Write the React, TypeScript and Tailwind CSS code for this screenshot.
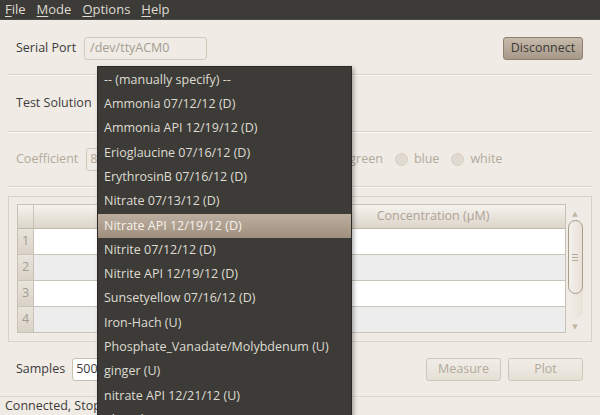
import React from 'react';

const font = { fontFamily: '"Open Sans", "DejaVu Sans", sans-serif' };

const menuItems = [
  '-- (manually specify) --',
  'Ammonia 07/12/12 (D)',
  'Ammonia API 12/19/12 (D)',
  'Erioglaucine 07/16/12 (D)',
  'ErythrosinB 07/16/12 (D)',
  'Nitrate 07/13/12 (D)',
  'Nitrate API 12/19/12 (D)',
  'Nitrite 07/12/12 (D)',
  'Nitrite API 12/19/12 (D)',
  'Sunsetyellow 07/16/12 (D)',
  'Iron-Hach (U)',
  'Phosphate_Vanadate/Molybdenum (U)',
  'ginger (U)',
  'nitrate API 12/21/12 (U)',
  'phosphate API 12/21/12 (U)',
];

function Separator() {
  return <div className="h-[2px] border-t border-[#d8d2c8] border-b border-b-[#fbfaf7]" />;
}

function Radio({ label }: { label: string }) {
  return (
    <div className="flex items-center gap-[6px]">
      <span className="w-[13px] h-[13px] rounded-full bg-[#e0dad1] border border-[#d6cfc4]" />
      <span>{label}</span>
    </div>
  );
}

function MenuBar() {
  const items = ['File', 'Mode', 'Options', 'Help'];
  return (
    <div className="h-[20px] bg-[#3c3b37] border-b border-[#4a4944] flex items-center pl-[5px] gap-[11px] text-[13px] text-[#dfdbd2]">
      {items.map((it) => (
        <span key={it}>
          <span className="underline underline-offset-2">{it[0]}</span>
          {it.slice(1)}
        </span>
      ))}
    </div>
  );
}

function Table() {
  const rows = [1, 2, 3, 4];
  return (
    <div className="flex border border-[#d9d2c6] mt-[8px] h-[146px] px-[8px] pt-[7px]">
      <div className="w-[550px] h-[129px] border border-[#c8c1b6] bg-white flex flex-col">
        <div className="h-[24px] flex bg-gradient-to-b from-[#f6f3ee] to-[#dcd5ca] border-b border-[#bfb8ac] text-[#aca396]">
          <div className="w-[16px] border-r border-[#cbc4b8]" />
          <div className="w-[267px] border-r border-[#cbc4b8]" />
          <div className="flex-1 flex items-center justify-center">Concentration (µM)</div>
        </div>
        {rows.map((r) => (
          <div key={r} className={`flex-1 flex border-b border-[#c9c3b9] last:border-b-0 ${r % 2 === 0 ? 'bg-[#ededed]' : 'bg-white'}`}>
            <div className="w-[16px] bg-gradient-to-b from-[#e9e4dc] to-[#d9d2c6] border-r border-[#c9c2b6] flex items-center justify-center text-[#a39c92]">
              {r}
            </div>
            <div className="flex-1" />
          </div>
        ))}
      </div>
      <div className="w-[16px] ml-[1px] h-[129px] flex flex-col items-center text-[#bdb5a8]">
        <span className="text-[7px] leading-none mt-[6px]">▲</span>
        <div className="mt-[3px] w-[15px] h-[99px] rounded-full bg-gradient-to-r from-[#f1ede6] to-[#e9e3d9] flex flex-col">
          <div className="h-[74px] rounded-full border border-[#a99d8c] bg-gradient-to-r from-[#f4f1ec] to-[#e7e1d8] flex flex-col items-center justify-center gap-[2px]">
            <span className="w-[6px] h-px bg-[#b5ab9c]" />
            <span className="w-[6px] h-px bg-[#b5ab9c]" />
            <span className="w-[6px] h-px bg-[#b5ab9c]" />
          </div>
        </div>
        <span className="text-[7px] leading-none mt-[4px]">▼</span>
      </div>
    </div>
  );
}

function DropdownMenu() {
  return (
    <div className="absolute left-[97px] top-[66px] w-[255px] h-[360px] bg-[#3c3b37] border border-[#2a2926] pt-[1px] text-[#dfdbd2] shadow-[2px_2px_4px_rgba(0,0,0,0.3)]">
      {menuItems.map((m, i) => (
        <div
          key={m}
          className={`h-[24.3px] flex items-center pl-[6px] whitespace-nowrap ${i === 6 ? 'bg-gradient-to-b from-[#bcae9f] to-[#9f8f7e] text-[#f5f2ed]' : ''}`}
        >
          {m}
        </div>
      ))}
    </div>
  );
}

export default function App() {
  return (
    <div className="relative w-[600px] h-[415px] overflow-hidden bg-[#f0ebe4] text-[12.5px] text-[#3c3c3c]" style={font}>
      <MenuBar />
      <div className="px-[8px]">
        <div className="flex items-center px-[8px] pt-[17px] pb-[14px]">
          <span className="mr-[8px]">Serial Port</span>
          <div className="w-[123px] h-[23px] border border-[#d3cabb] rounded-[3px] flex items-center px-[5px] text-[#a59d91]">
            /dev/ttyACM0
          </div>
          <div className="ml-auto mr-[1px] w-[80px] h-[23px] rounded-[3px] border border-[#8f806e] bg-gradient-to-b from-[#c6baab] to-[#a7998a] flex items-center justify-center text-[#3c3b37]">
            Disconnect
          </div>
        </div>
        <Separator />
        <div className="h-[55px] flex items-center px-[8px]">
          <span>Test Solution</span>
        </div>
        <Separator />
        <div className="h-[53px] flex items-center px-[8px] text-[#b3aa9c]">
          <span className="mr-[8px]">Coefficient</span>
          <div className="w-[90px] h-[23px] border border-[#d3cabb] rounded-[3px] flex items-center px-[3px]">8</div>
          <div className="ml-[154px] flex items-center gap-[12px]">
            <Radio label="green" />
            <Radio label="blue" />
            <Radio label="white" />
          </div>
        </div>
        <Separator />
        <Table />
        <div className="h-[54px] flex items-center px-[8px]">
          <span className="mr-[7px]">Samples</span>
          <div className="w-[70px] h-[23px] border border-[#c9bfae] bg-white rounded-[3px] flex items-center px-[3px]">500</div>
          <div className="ml-auto mr-[1px] flex gap-[7px] text-[#b3aa9c]">
            <div className="w-[75px] h-[23px] rounded-[3px] border border-[#cec6b9] bg-gradient-to-b from-[#f1ede7] to-[#e6e0d6] flex items-center justify-center">Measure</div>
            <div className="w-[75px] h-[23px] rounded-[3px] border border-[#cec6b9] bg-gradient-to-b from-[#f1ede7] to-[#e6e0d6] flex items-center justify-center">Plot</div>
          </div>
        </div>
      </div>
      <div className="border-t border-[#ddd7cd] h-[20px] flex items-center pl-[5px]">Connected, Stopped</div>
      <DropdownMenu />
    </div>
  );
}
